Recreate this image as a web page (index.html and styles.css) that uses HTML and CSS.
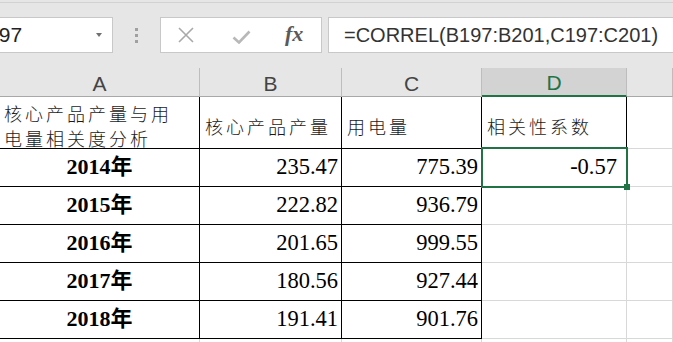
FILE: index.html
```html
<!DOCTYPE html>
<html lang="zh-CN">
<head>
    <meta charset="UTF-8">
    <title>核心产品产量与用电量相关度分析</title>
    <link rel="stylesheet" href="styles.css">
</head>
<body>
    <div class="toolbar">
        <div class="ribbon-edge"></div>
        <div class="formula-bar">
            <div class="name-box">
                <span class="name-text">D197</span>
                <span class="name-arrow"></span>
            </div>
            <div class="bar-grip"><i></i><i></i><i></i></div>
            <div class="fx-buttons">
                <svg class="btn-cancel" width="18" height="16" viewBox="0 0 18 16">
                    <path d="M2 1 L16 15 M16 1 L2 15" stroke="#a9a9a9" stroke-width="1.6" fill="none"/>
                </svg>
                <svg class="btn-enter" width="19" height="14" viewBox="0 0 19 14">
                    <path d="M1.5 7.5 L7 12.5 L17.5 1.5" stroke="#b8b8b8" stroke-width="2.6" fill="none"/>
                </svg>
                <span class="btn-fx">fx</span>
            </div>
            <div class="formula-input">=CORREL(B197:B201,C197:C201)</div>
        </div>
    </div>

    <div class="sheet">
        <!-- 列标 -->
        <div class="col-head">A</div>
        <div class="col-head">B</div>
        <div class="col-head">C</div>
        <div class="col-head active">D</div>
        <div class="col-head"></div>

        <!-- 表头 -->
        <div class="cell b title">核心产品产量与用<br>电量相关度分析</div>
        <div class="cell b label">核心产品产量</div>
        <div class="cell b label">用电量</div>
        <div class="cell b label">相关性系数</div>
        <div class="cell"></div>

        <div class="cell b year">2014年</div>
        <div class="cell b num">235.47</div>
        <div class="cell b num">775.39</div>
        <div class="cell num result selected">-0.57</div>
        <div class="cell"></div>

        <div class="cell b year">2015年</div>
        <div class="cell b num">222.82</div>
        <div class="cell b num">936.79</div>
        <div class="cell"></div>
        <div class="cell"></div>

        <div class="cell b year">2016年</div>
        <div class="cell b num">201.65</div>
        <div class="cell b num">999.55</div>
        <div class="cell"></div>
        <div class="cell"></div>

        <div class="cell b year">2017年</div>
        <div class="cell b num">180.56</div>
        <div class="cell b num">927.44</div>
        <div class="cell"></div>
        <div class="cell"></div>

        <div class="cell b year">2018年</div>
        <div class="cell b num">191.41</div>
        <div class="cell b num">901.76</div>
        <div class="cell"></div>
        <div class="cell"></div>

        <div class="cell"></div>
        <div class="cell"></div>
        <div class="cell"></div>
        <div class="cell"></div>
        <div class="cell"></div>
    </div>
</body>
</html>
```

FILE: styles.css
```css
html, body {
    margin: 0;
    padding: 0;
}
body {
    width: 673px;
    height: 342px;
    overflow: hidden;
    background: #ffffff;
    font-family: "Liberation Sans", Arial, sans-serif;
}

/* 编辑栏 */
.toolbar {
    height: 68px;
    background: #e6e6e6;
    overflow: hidden;
}
.ribbon-edge {
    height: 2px;
    border-bottom: 1px solid #d2d2d2;
}
.formula-bar {
    display: flex;
    align-items: center;
    height: 36px;
    margin-top: 14px;
}
.name-box {
    box-sizing: border-box;
    width: 146px;
    height: 36px;
    margin-left: -33px;
    padding: 0 10px 0 4px;
    background: #ffffff;
    border: 1px solid #c8c8c8;
    display: flex;
    align-items: center;
    justify-content: space-between;
}
.name-text {
    font-size: 21px;
    color: #222222;
}
.name-arrow {
    width: 0;
    height: 0;
    border-left: 3px solid transparent;
    border-right: 3px solid transparent;
    border-top: 4px solid #707070;
}
.bar-grip {
    width: 47px;
    display: flex;
    flex-direction: column;
    align-items: center;
    gap: 3px;
}
.bar-grip i {
    display: block;
    width: 3px;
    height: 3px;
    background: #a0a0a0;
}
.fx-buttons {
    box-sizing: border-box;
    width: 162px;
    height: 36px;
    background: #ffffff;
    border: 1px solid #c8c8c8;
    display: flex;
    align-items: center;
    padding-left: 16px;
}
.btn-enter {
    margin-left: 37px;
    margin-top: 4px;
}
.btn-fx {
    margin-left: 34px;
    font-family: "Liberation Serif", "Times New Roman", serif;
    font-style: italic;
    font-weight: bold;
    font-size: 22px;
    color: #5a5a5a;
    margin-top: -3px;
}
.formula-input {
    box-sizing: border-box;
    flex: 1;
    height: 36px;
    margin-left: 6px;
    margin-right: -10px;
    padding-left: 15px;
    background: #ffffff;
    border: 1px solid #c8c8c8;
    display: flex;
    align-items: center;
    font-size: 20px;
    color: #333333;
    white-space: nowrap;
}

/* 工作表 */
.sheet {
    display: grid;
    grid-template-columns: 200px 142px 140px 145px 1fr;
    grid-template-rows: 29px 52px repeat(5, 38px) 4px;
}
.col-head {
    box-sizing: border-box;
    background: #e6e6e6;
    border-right: 1px solid #bdbdbd;
    border-bottom: 1px solid #a8a8a8;
    display: flex;
    align-items: center;
    justify-content: center;
    padding-top: 3px;
    font-size: 21px;
    color: #444444;
}
.col-head.active {
    background: #d3d3d3;
    color: #217346;
    border-bottom: 2px solid #217346;
}
.cell {
    box-sizing: border-box;
    border-right: 1px solid #d8d8d8;
    border-bottom: 1px solid #d8d8d8;
    display: flex;
    align-items: center;
    white-space: nowrap;
    overflow: hidden;
    color: #000000;
}
.cell.b {
    border-color: #000000;
}
.title, .label {
    font-family: "Noto Sans CJK SC", sans-serif;
    font-weight: 300;
    font-size: 18px;
    letter-spacing: 3px;
    color: #1a1a1a;
    padding-top: 6px;
    padding-left: 5px;
}
.title {
    padding-left: 4px;
    line-height: 25px;
}
.year {
    justify-content: center;
    font-family: "Liberation Serif", "Noto Sans CJK SC", serif;
    font-weight: bold;
    font-size: 22px;
    line-height: 1;
    padding-bottom: 2px;
}
.num {
    justify-content: flex-end;
    padding-right: 3px;
    font-family: "Liberation Serif", "Times New Roman", serif;
    font-size: 22.5px;
    line-height: 1;
}
.result {
    padding-right: 9px;
}
.selected {
    position: relative;
    overflow: visible;
}
.selected::after {
    content: "";
    position: absolute;
    left: -1px;
    top: -2px;
    right: -2px;
    bottom: -2px;
    border: 2px solid #217346;
}
.selected::before {
    content: "";
    position: absolute;
    right: -4px;
    bottom: -4px;
    width: 6px;
    height: 6px;
    background: #217346;
    z-index: 1;
}
```
